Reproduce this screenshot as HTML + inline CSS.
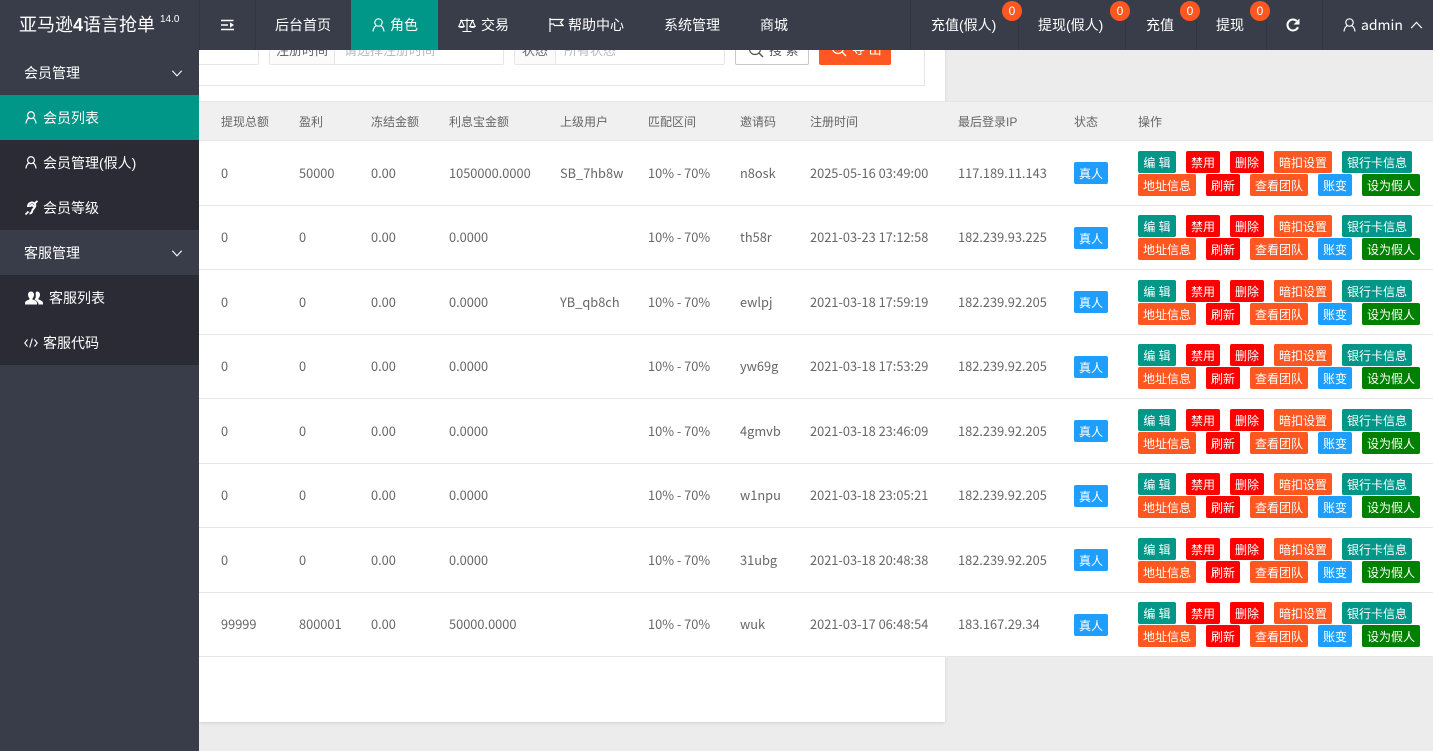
<!DOCTYPE html>
<html lang="zh-CN"><head><meta charset="utf-8"><title>亚马逊4语言抢单</title>
<style>
*{box-sizing:border-box;margin:0;padding:0}
html,body{width:1433px;height:751px;overflow:hidden;background:#ececec;font-family:"Liberation Sans","Noto Sans CJK SC",sans-serif;font-size:14px}
.a{position:absolute;white-space:nowrap}
#panel{position:absolute;left:199px;top:0;width:746px;height:722px;background:#fff;box-shadow:0 1px 3px rgba(0,0,0,.12)}
.box{position:absolute;height:33px;top:32px;border:1px solid #e6e6e6;background:#fff;border-radius:2px}
.lbl{position:absolute;left:0;top:0;bottom:0;background:#fbfbfb;border-right:1px solid #e6e6e6;color:#666;font-size:13px;line-height:35px;text-align:center}
.ph{position:absolute;top:0;line-height:35px;color:#bbb;font-size:13px}
#thead{position:absolute;left:199px;top:101px;width:1234px;height:40px;background:#f0f0f0;border-top:1px solid #e6e6e6;border-bottom:1px solid #e6e6e6}
#thead span{position:absolute;top:0;line-height:40px;font-size:12px;color:#666;white-space:nowrap}
.wrow{position:absolute;left:199px;width:1234px;background:#fff}
.ln{position:absolute;left:199px;width:1234px;height:1px;background:#e6e6e6}
.r{position:absolute;left:0;width:1433px;height:64px}
.r span{position:absolute;top:22px;line-height:20px;font-family:"Noto Sans CJK SC",sans-serif;font-size:12.8px;color:#666;white-space:nowrap}
.c1{left:221px}.c2{left:299px}.c3{left:371px}.c4{left:449px}.c5{left:560px}.c6{left:648px}.c7{left:740px}.c8{left:810px}.c9{left:958px}
.r b{position:absolute;height:22px;line-height:24px;font-size:12px;font-weight:normal;color:#fff;text-align:center;border-radius:2px;white-space:nowrap}
.r b.z{left:1074px;width:34px;top:21px;background:#1e9fff}
.r:nth-of-type(even) b.z{top:22px}
.t{top:10px}.u{top:33px}
.g{background:#009688}.d{background:#f00}.o{background:#ff5722}.l{background:#1e9fff}.v{background:#008000}
.b1{left:1138px;width:38px}.b2{left:1186px;width:34px}.b3{left:1230px;width:34px}.b4{left:1274px;width:58px}.b5{left:1342px;width:70px}
.b6{left:1138px;width:58px}.b7{left:1206px;width:34px}.b8{left:1250px;width:58px}.b9{left:1318px;width:34px}.b0{left:1362px;width:58px}
#top{position:absolute;left:0;top:0;width:1433px;height:50px;background:#393d49}
.sp{position:absolute;top:0;width:1px;height:50px;background:#33363f}
.nv{position:absolute;top:0;line-height:50px;color:#fff;font-size:14px;white-space:nowrap}
.bd{position:absolute;top:1px;width:20px;height:20px;border-radius:50%;background:#ff5722;color:#fff;font-size:12px;line-height:20px;text-align:center}
#side{position:absolute;left:0;top:50px;width:199px;height:701px;background:#393d49}
.s{position:absolute;left:0;width:199px;height:45px;line-height:47px;color:#fff;font-size:14px;white-space:nowrap}
.sub{background:#2a2b34}
svg{position:absolute;overflow:visible}
.st{fill:none;stroke:#fff}
</style></head><body>

<div id="panel"></div>
<div class="a" style="left:199px;width:60px;border:1px solid #e6e6e6;border-left:0;border-radius:0 2px 2px 0;top:32px;height:33px;background:#fff"></div>
<div class="a" style="left:199px;top:0;width:726px;height:86px;border:1px solid #e6e6e6;border-left:0;border-top:0"></div>
<div class="box" style="left:269px;width:235px"><div class="lbl" style="width:65px">注册时间</div><div class="ph" style="left:74px">请选择注册时间</div></div>
<div class="box" style="left:514px;width:211px"><div class="lbl" style="width:41px">状态</div><div class="ph" style="left:49px">所有状态</div></div>
<div class="a" style="left:735px;top:32px;width:74px;height:33px;border:1px solid #c9c9c9;background:#fff;border-radius:2px;color:#555;font-size:13px;line-height:35px;text-indent:33px">搜 索
<svg style="left:12px;top:9px" width="16" height="16" viewBox="0 0 16 16"><circle class="st" style="stroke:#555" cx="7" cy="7" r="5.5" stroke-width="1.2"/><path class="st" style="stroke:#555" stroke-width="1.4" d="M11 11l4 4"/></svg></div>
<div class="a" style="left:819px;top:32px;width:72px;height:33px;background:#ff5722;border-radius:2px;color:#fff;font-size:13px;line-height:35px;text-indent:33px">导 出
<svg style="left:12px;top:9px" width="16" height="16" viewBox="0 0 16 16"><circle class="st" cx="7" cy="7" r="5.5" stroke-width="1.2"/><path class="st" stroke-width="1.4" d="M11 11l4 4"/></svg></div>

<div id="thead">
<span style="left:22px">提现总额</span><span style="left:100px">盈利</span><span style="left:172px">冻结金额</span><span style="left:250px">利息宝金额</span><span style="left:361px">上级用户</span><span style="left:449px">匹配区间</span><span style="left:541px">邀请码</span><span style="left:611px">注册时间</span><span style="left:759px">最后登录IP</span><span style="left:875px">状态</span><span style="left:939px">操作</span>
</div>
<div class="wrow" style="top:141px;height:516px"></div>
<div class="ln" style="top:205px"></div><div class="ln" style="top:269px"></div><div class="ln" style="top:334px"></div><div class="ln" style="top:398px"></div><div class="ln" style="top:463px"></div><div class="ln" style="top:527px"></div><div class="ln" style="top:592px"></div><div class="ln" style="top:656px"></div>

<div id="rows" style="position:absolute;left:0;top:0">
<div class="r" style="top:141px"><span class="c1">0</span><span class="c2">50000</span><span class="c3">0.00</span><span class="c4">1050000.0000</span><span class="c5">SB_7hb8w</span><span class="c6">10% - 70%</span><span class="c7">n8osk</span><span class="c8">2025-05-16 03:49:00</span><span class="c9">117.189.11.143</span><b class="z">真人</b><b class="t b1 g">编 辑</b><b class="t b2 d">禁用</b><b class="t b3 d">删除</b><b class="t b4 o">暗扣设置</b><b class="t b5 g">银行卡信息</b><b class="u b6 o">地址信息</b><b class="u b7 d">刷新</b><b class="u b8 o">查看团队</b><b class="u b9 l">账变</b><b class="u b0 v">设为假人</b></div>
<div class="r" style="top:205px"><span class="c1">0</span><span class="c2">0</span><span class="c3">0.00</span><span class="c4">0.0000</span><span class="c6">10% - 70%</span><span class="c7">th58r</span><span class="c8">2021-03-23 17:12:58</span><span class="c9">182.239.93.225</span><b class="z">真人</b><b class="t b1 g">编 辑</b><b class="t b2 d">禁用</b><b class="t b3 d">删除</b><b class="t b4 o">暗扣设置</b><b class="t b5 g">银行卡信息</b><b class="u b6 o">地址信息</b><b class="u b7 d">刷新</b><b class="u b8 o">查看团队</b><b class="u b9 l">账变</b><b class="u b0 v">设为假人</b></div>
<div class="r" style="top:270px"><span class="c1">0</span><span class="c2">0</span><span class="c3">0.00</span><span class="c4">0.0000</span><span class="c5">YB_qb8ch</span><span class="c6">10% - 70%</span><span class="c7">ewlpj</span><span class="c8">2021-03-18 17:59:19</span><span class="c9">182.239.92.205</span><b class="z">真人</b><b class="t b1 g">编 辑</b><b class="t b2 d">禁用</b><b class="t b3 d">删除</b><b class="t b4 o">暗扣设置</b><b class="t b5 g">银行卡信息</b><b class="u b6 o">地址信息</b><b class="u b7 d">刷新</b><b class="u b8 o">查看团队</b><b class="u b9 l">账变</b><b class="u b0 v">设为假人</b></div>
<div class="r" style="top:334px"><span class="c1">0</span><span class="c2">0</span><span class="c3">0.00</span><span class="c4">0.0000</span><span class="c6">10% - 70%</span><span class="c7">yw69g</span><span class="c8">2021-03-18 17:53:29</span><span class="c9">182.239.92.205</span><b class="z">真人</b><b class="t b1 g">编 辑</b><b class="t b2 d">禁用</b><b class="t b3 d">删除</b><b class="t b4 o">暗扣设置</b><b class="t b5 g">银行卡信息</b><b class="u b6 o">地址信息</b><b class="u b7 d">刷新</b><b class="u b8 o">查看团队</b><b class="u b9 l">账变</b><b class="u b0 v">设为假人</b></div>
<div class="r" style="top:399px"><span class="c1">0</span><span class="c2">0</span><span class="c3">0.00</span><span class="c4">0.0000</span><span class="c6">10% - 70%</span><span class="c7">4gmvb</span><span class="c8">2021-03-18 23:46:09</span><span class="c9">182.239.92.205</span><b class="z">真人</b><b class="t b1 g">编 辑</b><b class="t b2 d">禁用</b><b class="t b3 d">删除</b><b class="t b4 o">暗扣设置</b><b class="t b5 g">银行卡信息</b><b class="u b6 o">地址信息</b><b class="u b7 d">刷新</b><b class="u b8 o">查看团队</b><b class="u b9 l">账变</b><b class="u b0 v">设为假人</b></div>
<div class="r" style="top:463px"><span class="c1">0</span><span class="c2">0</span><span class="c3">0.00</span><span class="c4">0.0000</span><span class="c6">10% - 70%</span><span class="c7">w1npu</span><span class="c8">2021-03-18 23:05:21</span><span class="c9">182.239.92.205</span><b class="z">真人</b><b class="t b1 g">编 辑</b><b class="t b2 d">禁用</b><b class="t b3 d">删除</b><b class="t b4 o">暗扣设置</b><b class="t b5 g">银行卡信息</b><b class="u b6 o">地址信息</b><b class="u b7 d">刷新</b><b class="u b8 o">查看团队</b><b class="u b9 l">账变</b><b class="u b0 v">设为假人</b></div>
<div class="r" style="top:528px"><span class="c1">0</span><span class="c2">0</span><span class="c3">0.00</span><span class="c4">0.0000</span><span class="c6">10% - 70%</span><span class="c7">31ubg</span><span class="c8">2021-03-18 20:48:38</span><span class="c9">182.239.92.205</span><b class="z">真人</b><b class="t b1 g">编 辑</b><b class="t b2 d">禁用</b><b class="t b3 d">删除</b><b class="t b4 o">暗扣设置</b><b class="t b5 g">银行卡信息</b><b class="u b6 o">地址信息</b><b class="u b7 d">刷新</b><b class="u b8 o">查看团队</b><b class="u b9 l">账变</b><b class="u b0 v">设为假人</b></div>
<div class="r" style="top:592px"><span class="c1">99999</span><span class="c2">800001</span><span class="c3">0.00</span><span class="c4">50000.0000</span><span class="c6">10% - 70%</span><span class="c7">wuk</span><span class="c8">2021-03-17 06:48:54</span><span class="c9">183.167.29.34</span><b class="z">真人</b><b class="t b1 g">编 辑</b><b class="t b2 d">禁用</b><b class="t b3 d">删除</b><b class="t b4 o">暗扣设置</b><b class="t b5 g">银行卡信息</b><b class="u b6 o">地址信息</b><b class="u b7 d">刷新</b><b class="u b8 o">查看团队</b><b class="u b9 l">账变</b><b class="u b0 v">设为假人</b></div>
</div>

<div id="top">
<div class="a" style="left:19px;top:0;line-height:50px;font-size:18px;color:#fff">亚马逊<span style="font-weight:bold">4</span>语言抢单</div>
<div class="a" style="left:160px;top:14px;font-size:10px;color:#fff;line-height:12px">14.0</div>
<div class="sp" style="left:199px"></div><div class="sp" style="left:255px"></div>
<svg style="left:220px;top:19px" width="14" height="12" viewBox="0 0 14 12"><path class="st" stroke-width="1.6" d="M1 1.500h12.500M1 6h7M1 10.500h13"/><path d="M14 6l-4-2.600v5.200z" fill="#fff"/></svg>
<div class="nv" style="left:275px">后台首页</div>
<div class="a" style="left:351px;top:0;width:87px;height:50px;background:#009688"></div>
<svg style="left:372px;top:18px" width="13" height="14" viewBox="0 0 13 14"><circle class="st" cx="6.500" cy="4.500" r="3.700" stroke-width="1.200"/><path class="st" stroke-width="1.200" d="M1 13.500c.3-3.600 2.200-5.600 3.500-5.800M12 13.500c-.3-3.600-2.200-5.600-3.500-5.800"/></svg>
<div class="nv" style="left:390px">角色</div>
<svg style="left:458px;top:18px" width="18" height="14" viewBox="0 0 18 14"><path class="st" stroke-width="1.100" d="M9 0.500v12.500M4.500 13.500h9M2 2.500h14M3.500 2.500L0.800 8.500h5.400zM14.500 2.500l-2.700 6h5.400z"/><path d="M0.500 8.500h6c-.3 2-5.700 2-6 0zM11.500 8.500h6c-.3 2-5.700 2-6 0z" fill="#fff"/></svg>
<div class="nv" style="left:481px">交易</div>
<svg style="left:549px;top:18px" width="15" height="14" viewBox="0 0 15 14"><path class="st" stroke-width="1.200" d="M1 0v14M1 1.500h13l-2.500 3 2.500 3H5.500L4.500 6H1"/></svg>
<div class="nv" style="left:568px">帮助中心</div>
<div class="nv" style="left:664px">系统管理</div>
<div class="nv" style="left:760px">商城</div>
<div class="sp" style="left:910px"></div><div class="sp" style="left:1018px"></div><div class="sp" style="left:1125px"></div><div class="sp" style="left:1196px"></div><div class="sp" style="left:1266px"></div><div class="sp" style="left:1322px"></div>
<div class="nv" style="left:931px">充值(假人)</div><div class="bd" style="left:1002px">0</div>
<div class="nv" style="left:1038px">提现(假人)</div><div class="bd" style="left:1110px">0</div>
<div class="nv" style="left:1146px">充值</div><div class="bd" style="left:1180px">0</div>
<div class="nv" style="left:1216px">提现</div><div class="bd" style="left:1250px">0</div>
<svg style="left:1286px;top:18px" width="14" height="14" viewBox="0 0 14 14"><path class="st" stroke-width="2" d="M12 9.200A5.500 5.500 0 1 1 10.800 3"/><path d="M13.500 0.500v6h-6z" fill="#fff"/></svg>
<svg style="left:1343px;top:18px" width="13" height="14" viewBox="0 0 13 14"><circle class="st" cx="6.500" cy="4.500" r="3.700" stroke-width="1.200"/><path class="st" stroke-width="1.200" d="M1 13.500c.3-3.600 2.200-5.600 3.500-5.800M12 13.500c-.3-3.600-2.200-5.600-3.500-5.800"/></svg>
<div class="nv" style="left:1361px;font-family:'Noto Sans CJK SC',sans-serif">admin</div>
<svg style="left:1410px;top:21px" width="13" height="8" viewBox="0 0 14 9"><path class="st" stroke-width="1.300" d="M1 8l6-6.500L13 8"/></svg>
</div>

<div id="side">
<div class="s" style="top:0;text-indent:24px">会员管理<svg style="left:171px;top:20px" width="12" height="7" viewBox="0 0 14 9"><path class="st" stroke-width="1.400" d="M1 1l6 6.500L13 1"/></svg></div>
<div class="s" style="top:45px;background:#009688;text-indent:43px">会员列表<svg style="left:25px;top:16px" width="12" height="13" viewBox="0 0 13 14"><circle class="st" cx="6.500" cy="4.500" r="3.700" stroke-width="1.300"/><path class="st" stroke-width="1.300" d="M1 13.500c.3-3.600 2.200-5.600 3.500-5.800M12 13.500c-.3-3.600-2.200-5.600-3.500-5.800"/></svg></div>
<div class="s sub" style="top:90px;text-indent:43px">会员管理(假人)<svg style="left:25px;top:16px" width="12" height="13" viewBox="0 0 13 14"><circle class="st" cx="6.500" cy="4.500" r="3.700" stroke-width="1.300"/><path class="st" stroke-width="1.300" d="M1 13.500c.3-3.600 2.200-5.600 3.500-5.800M12 13.500c-.3-3.600-2.200-5.600-3.500-5.800"/></svg></div>
<div class="s sub" style="top:135px;text-indent:43px">会员等级<svg style="left:25px;top:16px" width="13" height="14" viewBox="0 0 13 14"><path class="st" stroke-width="2" d="M3 6c0-3 2-4.500 4-4.500s3.500 1.500 3.200 3.500c-.3 2.200-2.700 2.800-3 5-.2 1.600-1.400 2.500-2.700 2.500M5.200 6c0-1.200.8-2 1.800-2s1.500 1 1 2"/><path class="st" stroke-width="1.800" d="M9.500 2.500L12.500 0M0.500 13.500l3-3"/></svg></div>
<div class="s" style="top:180px;text-indent:24px">客服管理<svg style="left:171px;top:20px" width="12" height="7" viewBox="0 0 14 9"><path class="st" stroke-width="1.400" d="M1 1l6 6.500L13 1"/></svg></div>
<div class="s sub" style="top:225px;text-indent:49px">客服列表<svg style="left:25px;top:16px" width="18" height="14" viewBox="0 0 18 14"><path d="M6 0.500c2 0 3 1.500 3 3.300 0 1.500-.6 2.800-1.500 3.500v1.200c1.800.6 4.500 1.500 4.500 3.500v1.500H0v-1.500c0-2 2.700-2.900 4.500-3.500V7.300C3.600 6.600 3 5.300 3 3.800 3 2 4 .5 6 .5z" fill="#fff"/><path d="M12 0.500c2 0 3 1.500 3 3.300 0 1.500-.6 2.800-1.500 3.500v1.200c1.800.6 4.500 1.500 4.500 3.500v1.500h-4.500c0-2.500-1.800-3.800-4-4.800 1-1.200 1.500-2.800 1.300-4.500C10.500 2 10.700 .5 12 .5z" fill="#fff"/></svg></div>
<div class="s sub" style="top:270px;text-indent:43px">客服代码<svg style="left:24px;top:18px" width="14" height="10" viewBox="0 0 14 10"><path class="st" stroke-width="1.100" d="M3.500 1.500L.8 5l2.700 3.500M10.500 1.500L13.200 5l-2.700 3.500M8.300 0.500L5.700 9.500"/></svg></div>
</div>
</body></html>
